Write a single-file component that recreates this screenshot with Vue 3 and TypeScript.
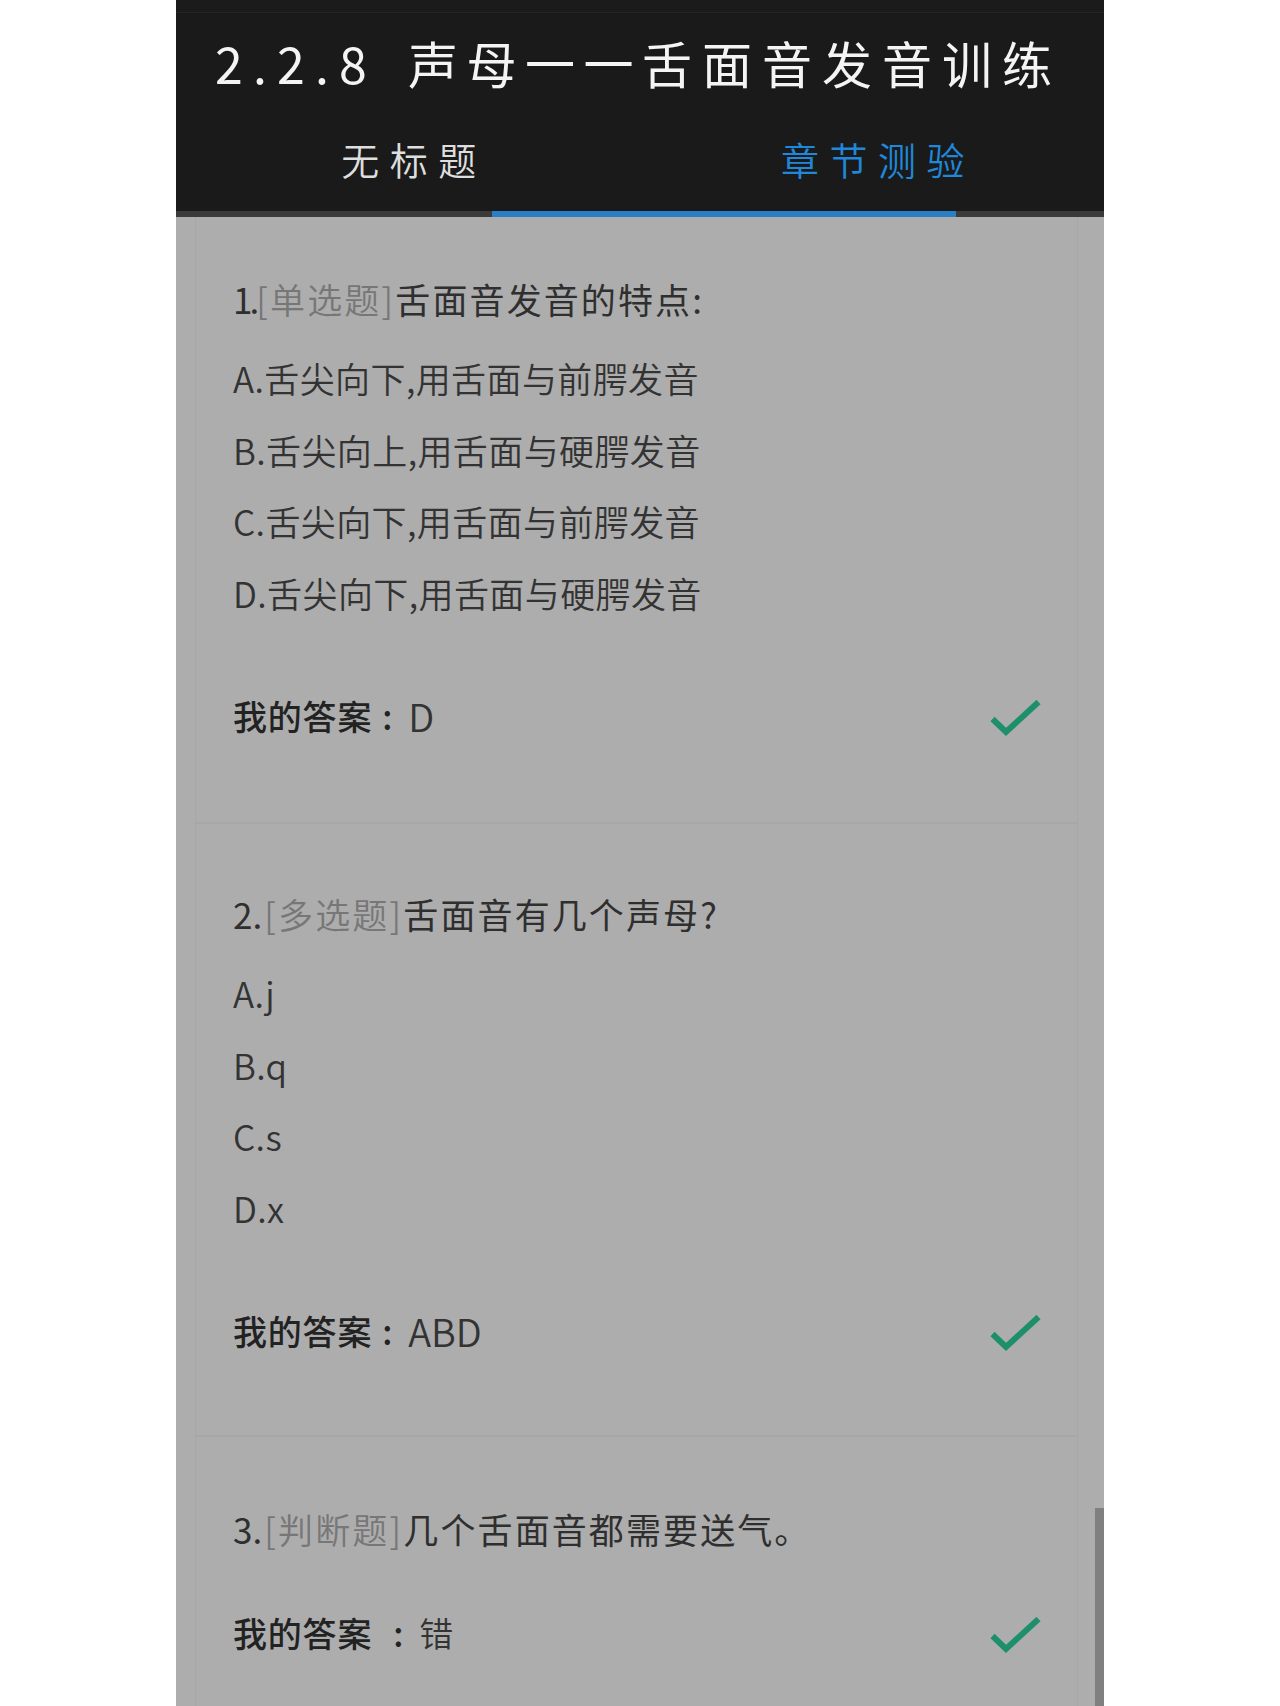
<script setup lang="ts">
interface Question {
  no: string
  tag: string
  text: string
  options: string[]
}
const questions: Question[] = [
  { no: '1.', tag: '[单选题]', text: '舌面音发音的特点:', options: ['A.舌尖向下,用舌面与前腭发音', 'B.舌尖向上,用舌面与硬腭发音', 'C.舌尖向下,用舌面与前腭发音', 'D.舌尖向下,用舌面与硬腭发音'] },
  { no: '2.', tag: '[多选题]', text: '舌面音有几个声母?', options: ['A.j', 'B.q', 'C.s', 'D.x'] },
  { no: '3.', tag: '[判断题]', text: '几个舌面音都需要送气。', options: [] },
]
const answers = ['D', 'ABD', '错']
</script>

<template>
  <div class="page">
    <div class="phone">
      <div class="strip"></div>
      <header class="head">
        <h1 class="title"><span class="num">2.2.8</span><span class="lead">声母一一</span>舌面音发音训练</h1>
        <nav class="tabs">
          <span class="tab">无标题</span>
          <span class="tab active">章节测验</span>
          <i class="indicator"></i>
        </nav>
      </header>
      <main class="list">
        <section v-for="(q, i) in questions" :key="q.no" class="card" :class="{ judge: !q.options.length }">
          <p class="row"><span class="no" :class="{ narrow: i === 0 }">{{ q.no }}</span><span class="tag">{{ q.tag }}</span>{{ q.text }}</p>
          <div v-if="q.options.length" class="options">
            <p v-for="o in q.options" :key="o" class="opt">{{ o }}</p>
          </div>
          <div class="answer">
            <span class="label">我的答案<span class="colon" :class="{ wide: !q.options.length }">:</span></span>
            <span class="value" :class="{ cjk: !q.options.length }">{{ answers[i] }}</span>
            <svg class="check" width="51" height="37" viewBox="0 0 51 37"><polyline points="2.5,19 16,32 48.5,2" fill="none" stroke="#1e8f6b" stroke-width="6" /></svg>
          </div>
        </section>
      </main>
      <i class="scroll"></i>
    </div>
  </div>
</template>

<style>
html, body { background: #fff; }
</style>

<style scoped>
.page {
  width: 1280px;
  height: 1706px;
  overflow: hidden;
  background: #fff;
  font-family: "Noto Sans CJK SC", "Noto Sans", sans-serif;
}
.phone {
  position: relative;
  width: 928px;
  height: 1706px;
  margin-left: 176px;
  overflow: hidden;
  background: #adadad;
  display: flex;
  flex-direction: column;
}
.strip {
  height: 12px;
  flex: none;
  background: #1b1b1b;
  border-bottom: 1px solid #252525;
}
.head {
  flex: none;
  background: #1a1a1a;
  position: relative;
  z-index: 1;
}
.title {
  margin: 0;
  height: 98px;
  padding: 0 0 2px 39px;
  display: flex;
  align-items: center;
  font-size: 50px;
  font-weight: 400;
  letter-spacing: 10px;
  color: #f4f4f4;
  white-space: pre;
}
.num {
  width: 193px;
  flex: none;
  letter-spacing: 10.2px;
}
.lead { letter-spacing: 8.5px; }
.tabs {
  position: relative;
  height: 98px;
  display: grid;
  grid-template-columns: 1fr 1fr;
  align-items: center;
  border-bottom: 6px solid #3a3a3a;
}
.tab {
  text-align: center;
  font-size: 38px;
  font-weight: 350;
  letter-spacing: 10.5px;
  color: #dedede;
  margin-bottom: 8px;
  padding-left: 12px;
}
.tab.active { color: #1f88da; }
.indicator {
  position: absolute;
  left: 316px;
  bottom: -6px;
  width: 464px;
  height: 6px;
  background: #2a7fc4;
}
.list {
  flex: 1;
  margin-top: -8px;
}
.card {
  margin: 0 26px 0 19px;
  padding: 56px 37px 68px;
  border: 1px solid #a7a7a7;
  border-width: 0 1px 2px;
}
.card:nth-of-type(2) { padding-bottom: 66px; }
.card.judge { padding-top: 58px; }
.card.judge .answer { margin-top: 32px; }
.row, .opt {
  margin: 0;
  height: 72px;
  line-height: 68px;
  font-size: 35px;
  letter-spacing: 2.1px;
  color: #2f2f2f;
  font-weight: 400;
  white-space: pre;
}
.no { letter-spacing: 0; margin-right: 2px; }
.no.narrow { letter-spacing: -3px; margin-right: 0; }
.tag { color: #777; font-weight: 350; letter-spacing: 2.2px; }
.options { margin-top: 7px; }
.opt {
  height: 71.5px;
  line-height: 67.5px;
  font-weight: 350;
  letter-spacing: .4px;
  color: #333;
}
.answer {
  display: flex;
  align-items: center;
  height: 72px;
  margin-top: 52px;
  font-size: 34px;
  color: #222;
}
.label { font-weight: 500; letter-spacing: .8px; padding-bottom: 5px; }
.colon { margin: 0 12px 0 10px; }
.colon.wide { margin: 0 15px 0 21px; }
.value { font-size: 38px; font-weight: 350; color: #333; padding-bottom: 5px; margin-left: 3px; }
.value.cjk { font-size: 34px; margin-left: 0; }
.check { margin-left: auto; margin-right: -1px; }
.scroll {
  position: absolute;
  top: 1508px;
  right: 0;
  bottom: 0;
  width: 9px;
  background: #808080;
}
</style>
